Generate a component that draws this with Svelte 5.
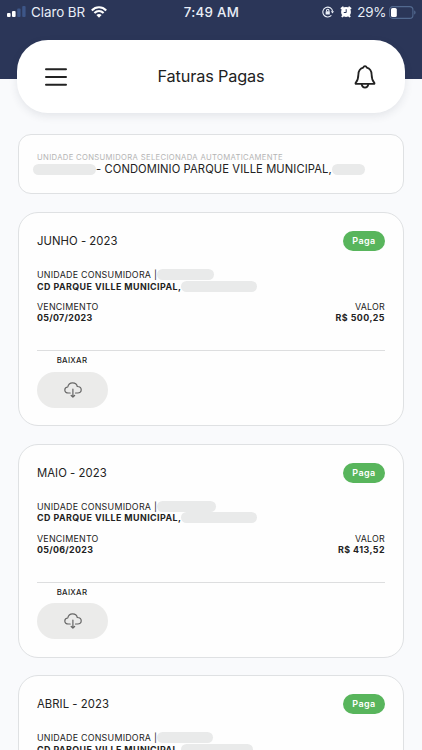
<script>
  const invoices = [
    { month: 'JUNHO - 2023', due: '05/07/2023', value: 'R$ 500,25', a: 57, b: 76 },
    { month: 'MAIO - 2023', due: '05/06/2023', value: 'R$ 413,52', a: 58.5, b: 76 },
    { month: 'ABRIL - 2023', a: 56, b: 72 }
  ];
</script>

<div class="screen">
  <div class="status">
    <div class="carrier">
      <svg width="19" height="12" viewBox="0 0 19 12">
        <rect x="0" y="7" width="3.6" height="4" rx="1" fill="#fff" />
        <rect x="5" y="5" width="3.6" height="6" rx="1" fill="#fff" />
        <rect x="10.2" y="2.4" width="3.4" height="8.6" rx="1" fill="#3d5688" />
        <rect x="15.2" y="0" width="3.4" height="11" rx="1" fill="#3d5688" />
      </svg>
      <span class="name">Claro BR</span>
      <svg width="16" height="12" viewBox="0 0 16 12" fill="none" stroke="#fff" stroke-width="2.1">
        <path d="M.8 4.4C4.9 .2 11.1 .2 15.2 4.4" />
        <path d="M3.4 7.1C6.1 4.5 9.9 4.5 12.6 7.1" />
        <path d="M8 11.7 5.4 9.1C6.9 7.7 9.1 7.7 10.6 9.1Z" fill="#fff" stroke="none" />
      </svg>
    </div>
    <span class="time">7:49 AM</span>
    <div class="power">
      <svg width="12" height="12" viewBox="0 0 12 12" fill="none" stroke="#e9eef7" stroke-width="1.1">
        <path d="M9.4 9.3A4.9 4.9 0 1 1 10.6 5.4" />
        <path d="M8.8 5.2H12L10.5 7.6Z" fill="#e9eef7" stroke="none" />
        <rect x="3.6" y="5.3" width="4.2" height="3.2" rx=".5" fill="#e9eef7" stroke="none" />
        <path d="M4.5 5.5V4.5a1.2 1.2 0 0 1 2.4 0v1" />
      </svg>
      <svg class="alarm" width="12" height="12" viewBox="0 0 12 12">
        <circle cx="6" cy="6" r="4.9" fill="#fff" />
        <path d="M1.6 2.4 2.8 1.4M10.4 2.4 9.2 1.4M2.4 10.4l.8-.8M9.6 10.4 8.8 9.6" stroke="#fff" stroke-width="2" stroke-linecap="round" />
        <path d="M6.2 3.2V6.5H3.8" fill="none" stroke="#2b3658" stroke-width="1" />
      </svg>
      <span class="percent">29%</span>
      <svg class="battery" width="27" height="13" viewBox="0 0 27 13">
        <rect x=".6" y=".6" width="23.3" height="11.8" rx="3.2" fill="none" stroke="#52698f" stroke-width="1.1" />
        <rect x="2" y="2" width="5.8" height="9" rx="1.6" fill="#fff" />
        <path d="M25.2 4.5c1.8.5 1.8 3.5 0 4Z" fill="#52698f" />
      </svg>
    </div>
  </div>

  <header>
    <svg width="24" height="20" viewBox="0 0 24 20" stroke="#222" stroke-width="2" stroke-linecap="round">
      <path d="M2 2.3H22M2 10H22M2 17.7H22" />
    </svg>
    <h1>Faturas Pagas</h1>
    <svg width="22" height="24" viewBox="0 0 22 24" fill="none" stroke="#222" stroke-width="1.8" stroke-linejoin="round" stroke-linecap="round">
      <path d="M11 1.2C10 1.2 9.5 1.8 9.2 2.6C6 3.5 4.5 6.2 4.4 9.4C4.3 13.6 3.6 15.6 1.8 17.6C1.2 18.4 1.5 18.9 2.3 18.9H19.7C20.5 18.9 20.8 18.4 20.2 17.6C18.4 15.6 17.7 13.6 17.6 9.4C17.5 6.2 16 3.5 12.8 2.6C12.5 1.8 12 1.2 11 1.2Z" />
      <path d="M7.7 19.4C8.1 21.6 9.3 22.6 11 22.6S13.9 21.6 14.3 19.4" />
    </svg>
  </header>

  <section class="selected">
    <div class="hint">UNIDADE CONSUMIDORA SELECIONADA AUTOMATICAMENTE</div>
    <div class="unit">
      <i class="mask" style:width="63px"></i>
      <span>- CONDOMINIO PARQUE VILLE MUNICIPAL,</span>
      <i class="mask" style:width="33.5px"></i>
    </div>
  </section>

  {#each invoices as inv}
    <article>
      <div class="top">
        <h2>{inv.month}</h2>
        <span class="badge">Paga</span>
      </div>
      <div class="line uc"><span>UNIDADE CONSUMIDORA |</span><i class="mask" style:width="{inv.a}px"></i></div>
      <div class="line bold cd"><span>CD PARQUE VILLE MUNICIPAL,</span><i class="mask" style:width="{inv.b}px"></i></div>
      {#if inv.due}
        <div class="line pair"><span>VENCIMENTO</span><span>VALOR</span></div>
        <div class="line bold pair2"><span>{inv.due}</span><span class="value">{inv.value}</span></div>
        <div class="actions">
          <div class="label">BAIXAR</div>
          <button aria-label="Baixar">
            <svg width="18" height="16" viewBox="0 0 18 16" fill="none" stroke="#666" stroke-width="1.2" stroke-linecap="round" stroke-linejoin="round">
              <path d="M6.2 11H4.4C2.2 11 .8 9.8 .8 8C.8 6.3 2.1 5.1 3.8 5C4.2 2.4 6.1 .8 8.6 .8C11 .8 12.8 2.2 13.3 4.5C15.6 4.5 17.2 5.8 17.2 7.8C17.2 9.8 15.7 11 13.6 11H11.5" />
              <path d="M8.9 7V15M7.2 13.5 8.9 15.2 10.6 13.5" />
            </svg>
          </button>
        </div>
      {/if}
    </article>
  {/each}
</div>

<style>
  :global(body) { margin: 0; overflow: hidden; }
  .screen {
    box-sizing: border-box;
    width: 422px;
    height: 750px;
    overflow: hidden;
    background: linear-gradient(#2b3658 0 78.7px, #f9fafc 78.7px);
    font-family: Inter, Roboto, sans-serif;
    color: #222;
  }
  svg { display: block; flex: none; }
  .status {
    display: grid;
    grid-template-columns: 1fr auto 1fr;
    align-items: center;
    height: 24px;
    padding: 0 6px 0 7px;
    color: #e9eef7;
    white-space: nowrap;
  }
  .carrier, .power { display: flex; align-items: center; }
  .name { margin: 0 6px 0 5px; font-size: 13.4px; letter-spacing: -.05px; }
  .time { font-size: 13.3px; font-weight: 500; letter-spacing: .3px; }
  .power { justify-content: flex-end; }
  .alarm { margin-left: 6px; }
  .percent { margin: 0 3px 0 5px; font-size: 13.4px; letter-spacing: -.3px; }
  header {
    box-sizing: border-box;
    display: flex;
    align-items: center;
    justify-content: space-between;
    margin: 16px 17px 0;
    padding: 0 29px 0 27px;
    height: 73px;
    border-radius: 31px;
    background: #fff;
    box-shadow: 0 3px 8px rgba(40, 50, 70, .1);
  }
  h1 { margin: 0; padding-bottom: 2px; font-size: 16.3px; font-weight: 400; line-height: 20px; letter-spacing: -.15px; }
  .selected, article {
    box-sizing: border-box;
    width: 386px;
    margin-left: 18px;
    border: 1px solid #dfe1e3;
    background: #fefefe;
  }
  .selected { height: 60.4px; margin-top: 21px; padding: 18px 0 0 14px; border-radius: 13px; }
  .hint { margin-left: 4px; font-size: 7.7px; line-height: 10px; letter-spacing: .32px; color: #b4b4b4; white-space: nowrap; }
  .unit { display: flex; align-items: center; height: 13px; font-size: 11.2px; line-height: 13px; letter-spacing: .1px; white-space: nowrap; }
  .mask { flex: none; height: 11px; border-radius: 6px; background: #e9eaea; }
  article { height: 214px; margin-top: 17.7px; padding: 18px 18px 0; border-radius: 20px; }
  .top { display: flex; justify-content: space-between; align-items: center; height: 20px; }
  h2 { margin: 0; font-size: 11.3px; font-weight: 400; letter-spacing: .05px; line-height: 16px; }
  .badge {
    width: 42px;
    height: 20px;
    border-radius: 10px;
    background: #58b55c;
    color: #fff;
    font-size: 9px;
    font-weight: 600;
    line-height: 20px;
    letter-spacing: .4px;
    text-align: center;
  }
  .line { display: flex; align-items: center; height: 11px; font-size: 8.9px; line-height: 11px; letter-spacing: .23px; white-space: nowrap; }
  .bold { font-weight: 700; letter-spacing: .3px; }
  .uc { margin-top: 18px; }
  .cd { margin-top: .6px; letter-spacing: .45px; }
  .pair { margin-top: 9.4px; justify-content: space-between; }
  .pair2 { justify-content: space-between; }
  .value { letter-spacing: .45px; }
  .actions { margin-top: 27px; border-top: 1px solid #dddedf; }
  .label { width: 70px; margin-top: 4px; font-size: 7.8px; font-weight: 500; line-height: 11px; letter-spacing: .3px; text-align: center; }
  button {
    display: flex;
    align-items: center;
    justify-content: center;
    width: 71px;
    height: 36px;
    margin-top: 5.5px;
    padding: 0;
    border: 0;
    border-radius: 18px;
    background: #ebebea;
  }
</style>
